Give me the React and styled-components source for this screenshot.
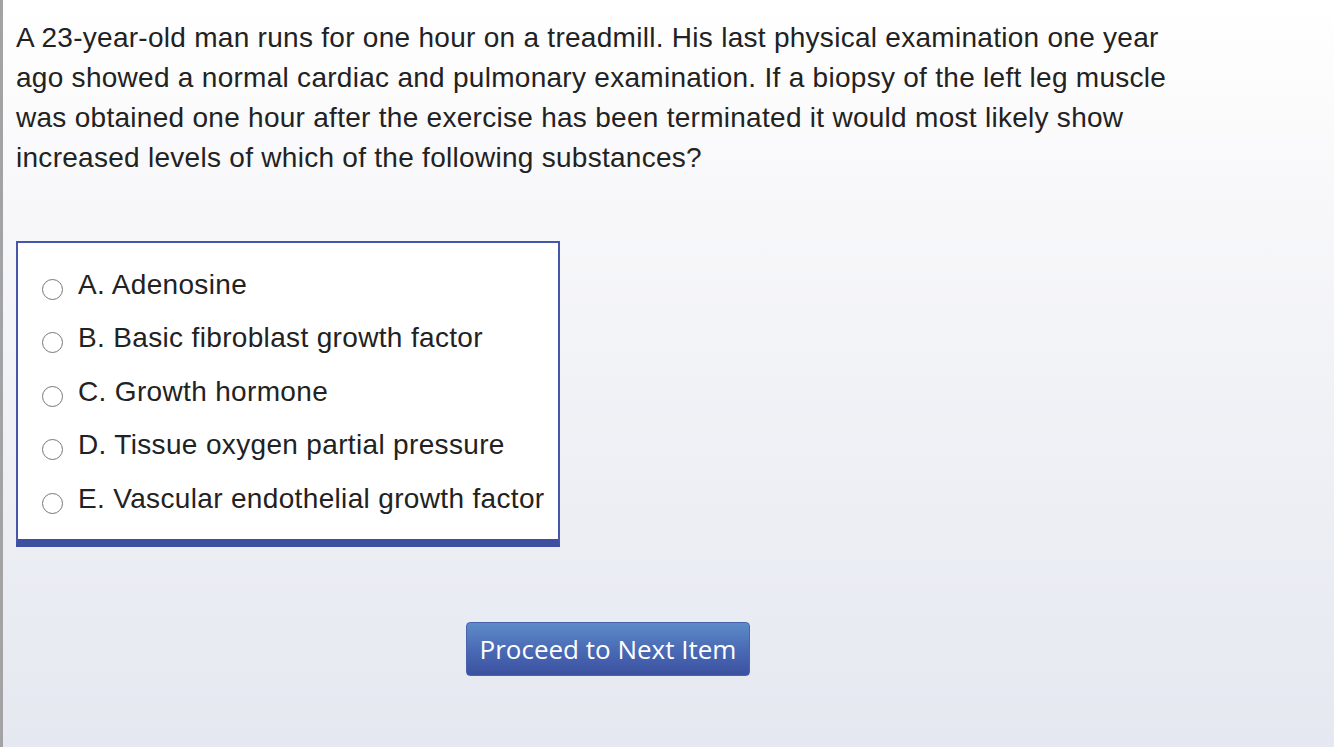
import React from "react";
import styled, { createGlobalStyle } from "styled-components";

const GlobalStyle = createGlobalStyle`
  html, body {
    margin: 0;
    padding: 0;
  }
  body {
    font-family: "Liberation Sans", Arial, sans-serif;
    color: #222;
  }
`;

const Page = styled.div`
  min-height: 100vh;
  box-sizing: border-box;
  border-left: 3px solid #a3a3a6;
  background: linear-gradient(to bottom, #ffffff 0%, #f8f8fa 25%, #eceef4 70%, #e5e8f0 100%);
  padding: 18px 0 0 13px;
`;

const Content = styled.div`
  width: 1184px;
`;

const Question = styled.p`
  margin: 0;
  font-size: 28px;
  letter-spacing: 0.28px;
  line-height: 40px;
  color: #222;
`;

const OptionsBox = styled.div`
  margin-top: 63px;
  width: 544px;
  box-sizing: border-box;
  background: #fff;
  border: 2px solid #4656a8;
  border-bottom: 8px solid #3e4fa0;
  padding: 15px 0 13px 24px;
`;

const Option = styled.label`
  display: flex;
  align-items: center;
  height: 53.5px;
  font-size: 28px;
  letter-spacing: 0.34px;
  color: #222;
  cursor: pointer;
`;

const Radio = styled.span`
  flex: none;
  width: 19px;
  height: 19px;
  border: 1.5px solid #777;
  border-radius: 50%;
  margin-top: 9px;
  margin-right: 15px;
  background: #fff;
`;

const ButtonRow = styled.div`
  margin-top: 75px;
  display: flex;
  justify-content: center;
`;

const NextButton = styled.button`
  width: 284px;
  height: 54px;
  border: 1px solid #4a63ad;
  border-radius: 4px;
  background: linear-gradient(to bottom, #5e8bc8 0%, #4a6bb5 50%, #3c51a0 100%);
  color: #fff;
  font-family: "Open Sans", sans-serif;
  font-size: 26px;
  padding: 0;
  cursor: pointer;
`;

const options = [
  "A. Adenosine",
  "B. Basic fibroblast growth factor",
  "C. Growth hormone",
  "D. Tissue oxygen partial pressure",
  "E. Vascular endothelial growth factor",
];

const App = () => {
  return (
    <>
      <GlobalStyle />
      <Page>
        <Content>
          <Question>
            A 23-year-old man runs for one hour on a treadmill. His last physical examination one year
            ago showed a normal cardiac and pulmonary examination. If a biopsy of the left leg muscle
            was obtained one hour after the exercise has been terminated it would most likely show
            increased levels of which of the following substances?
          </Question>

          <OptionsBox>
            {options.map((opt) => (
              <Option key={opt}>
                <Radio />
                {opt}
              </Option>
            ))}
          </OptionsBox>

          <ButtonRow>
            <NextButton>Proceed to Next Item</NextButton>
          </ButtonRow>
        </Content>
      </Page>
    </>
  );
};

export default App;
